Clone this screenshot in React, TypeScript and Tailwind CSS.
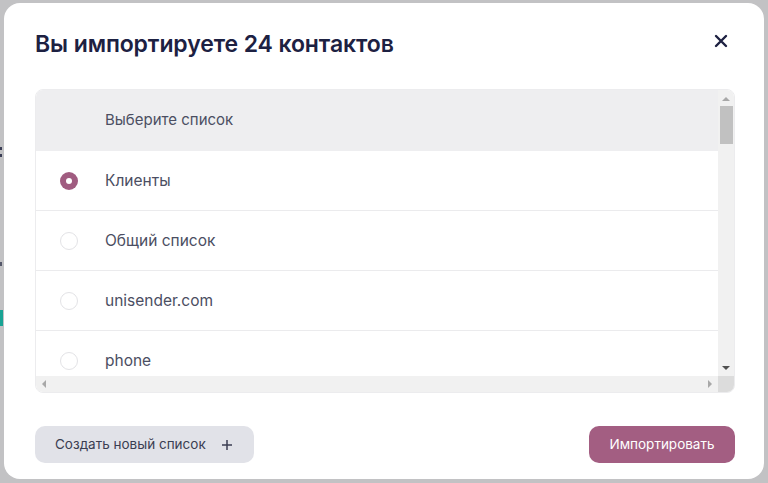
import React from "react";

const rows = [
  { label: "Клиенты", selected: true },
  { label: "Общий список", selected: false },
  { label: "unisender.com", selected: false },
  { label: "phone", selected: false },
];

function Radio({ selected }: { selected: boolean }) {
  if (selected) {
    return (
      <div className="w-[18px] h-[18px] rounded-full bg-[#a05c80] flex items-center justify-center shrink-0">
        <div className="w-[6px] h-[6px] rounded-full bg-white" />
      </div>
    );
  }
  return <div className="w-[18px] h-[18px] rounded-full bg-white border border-[#e3e3e6] shrink-0" />;
}

export default function App() {
  return (
    <div
      className="w-[768px] h-[483px] bg-[#c2c2c4] flex overflow-hidden"
      style={{ fontFamily: "Inter, 'Noto Sans', sans-serif" }}
    >
      <div className="w-[4px] shrink-0 flex flex-col">
        <div className="h-[147px]" />
        <div className="w-[2px] h-[3px] bg-[#3a3d55]" />
        <div className="h-[4px]" />
        <div className="w-[2px] h-[3px] bg-[#3a3d55]" />
        <div className="h-[105px]" />
        <div className="w-[2px] h-[4px] bg-[#55586a]" />
        <div className="h-[44px]" />
        <div className="w-[3px] h-[16px] bg-[#19a394]" />
      </div>
      <div className="mt-[3px] mb-[4px] w-[760px] h-[476px] bg-white rounded-[16px] pl-[31px] pr-[29px] pt-[25px] pb-[16px] flex flex-col">
        <div className="flex items-center justify-between h-[32px]">
          <h1 className="text-[23px] leading-[32px] font-semibold text-[#1d2142] tracking-[-0.1px]">
            Вы импортируете 24 контактов
          </h1>
          <svg width="14" height="14" viewBox="0 0 14 14" className="mr-[7px] mb-[6px]">
            <path d="M2 2 L12 12 M12 2 L2 12" stroke="#1d2142" strokeWidth="2.4" strokeLinecap="round" />
          </svg>
        </div>
        <div className="mt-[29px] h-[304px] rounded-[8px] border border-[#ececee] overflow-hidden flex flex-col">
          <div className="flex flex-1 min-h-0">
            <div className="flex-1 flex flex-col min-w-0 overflow-hidden">
              <div className="h-[61px] shrink-0 bg-[#eeeef0] flex items-center pl-[69px] text-[15px] text-[#4b4e62]">
                Выберите список
              </div>
              {rows.map((r, i) => (
                <div
                  key={r.label}
                  className={`h-[60px] shrink-0 flex items-center pl-[24px] gap-[27px] text-[15.5px] text-[#4b4e62] ${
                    i < rows.length - 1 ? "border-b border-[#ebebed]" : ""
                  }`}
                >
                  <Radio selected={r.selected} />
                  <span>{r.label}</span>
                </div>
              ))}
            </div>
            <div className="w-[16px] bg-[#f1f1f1] flex flex-col items-center shrink-0">
              <div className="h-[16px] flex items-center justify-center">
                <svg width="8" height="5" viewBox="0 0 8 5">
                  <path d="M0 5 L4 1 L8 5 Z" fill="#a8a8a8" />
                </svg>
              </div>
              <div className="w-[13px] h-[38px] bg-[#c1c1c1]" />
              <div className="flex-1" />
              <div className="h-[16px] flex items-center justify-center">
                <svg width="8" height="5" viewBox="0 0 8 5">
                  <path d="M0 0 L4 4 L8 0 Z" fill="#505050" />
                </svg>
              </div>
            </div>
          </div>
          <div className="h-[16px] flex shrink-0">
            <div className="flex-1 bg-[#f1f1f1] flex items-center justify-between px-[5px]">
              <svg width="5" height="8" viewBox="0 0 5 8">
                <path d="M5 0 L1 4 L5 8 Z" fill="#a8a8a8" />
              </svg>
              <svg width="5" height="8" viewBox="0 0 5 8">
                <path d="M0 0 L4 4 L0 8 Z" fill="#a8a8a8" />
              </svg>
            </div>
            <div className="w-[16px] bg-[#dcdcdc]" />
          </div>
        </div>
        <div className="mt-[33px] flex justify-between">
          <button className="h-[37px] w-[219px] rounded-[10px] bg-[#e1e2e8] flex items-center pl-[20px] text-[13.5px] text-[#3b3e52]">
            <span>Создать новый список</span>
            <svg width="10" height="10" viewBox="0 0 10 10" className="ml-[16px]">
              <path d="M5 0 V10 M0 5 H10" stroke="#3b3e52" strokeWidth="1.5" />
            </svg>
          </button>
          <button className="h-[37px] w-[146px] rounded-[10px] bg-[#a35e82] text-white text-[13.5px] flex items-center justify-center">
            Импортировать
          </button>
        </div>
      </div>
    </div>
  );
}
